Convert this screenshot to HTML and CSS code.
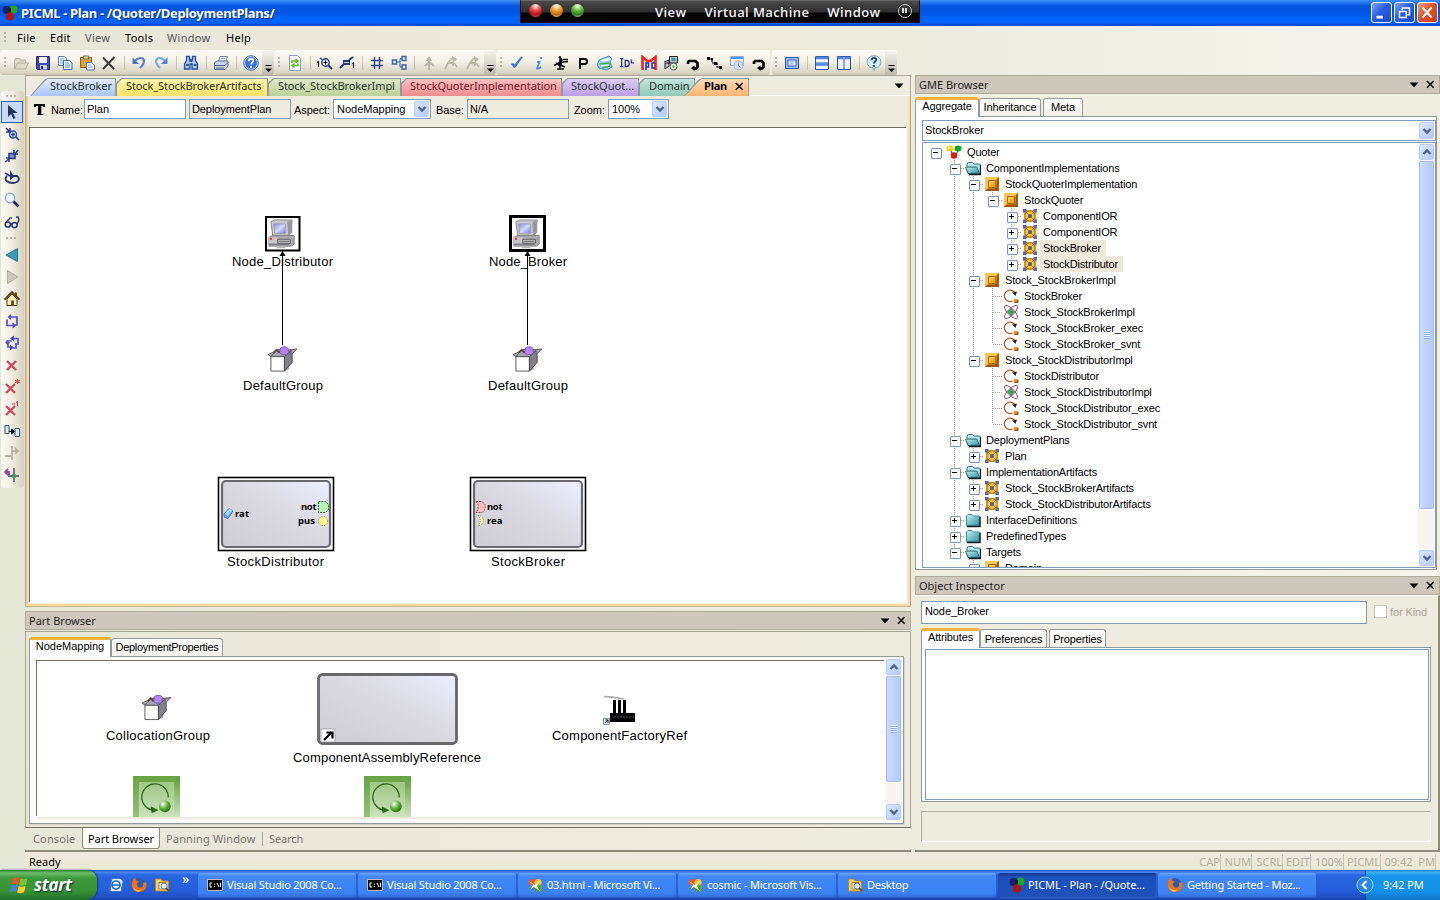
FILE: index.html
```html
<!DOCTYPE html>
<html lang="en">
<head>
<meta charset="utf-8">
<title>PICML - Plan - /Quoter/DeploymentPlans/</title>
<link rel="stylesheet" href="styles.css">
</head>
<body>
<svg class="defs" aria-hidden="true">
<defs>
<linearGradient id="gComp" x1="0" y1="1" x2="1" y2="0"><stop offset="0" stop-color="#cfced3"/><stop offset=".5" stop-color="#d9d8de"/><stop offset="1" stop-color="#eeeeff"/></linearGradient>
<linearGradient id="gGreen" x1="0" y1="0" x2="0" y2="1"><stop offset="0" stop-color="#5c9c35"/><stop offset="1" stop-color="#dcefd0"/></linearGradient>
<radialGradient id="gBall" cx=".35" cy=".3" r=".8"><stop offset="0" stop-color="#fff"/><stop offset=".5" stop-color="#5eaf35"/><stop offset="1" stop-color="#1f5c0a"/></radialGradient>
<linearGradient id="gFold" x1="0" y1="0" x2="1" y2="1"><stop offset="0" stop-color="#c8f4f4"/><stop offset="1" stop-color="#2f8f99"/></linearGradient>
<linearGradient id="gScreen" x1="0" y1="0" x2="1" y2="1"><stop offset="0" stop-color="#7f7ff4"/><stop offset=".5" stop-color="#d5dcff"/><stop offset="1" stop-color="#7272ee"/></linearGradient>

<symbol id="balls" viewBox="0 0 16 16"><circle cx="4.500" cy="5" r="4" fill="#17206b"/><circle cx="11.500" cy="4.500" r="4" fill="#24a527"/><circle cx="8" cy="11.500" r="4" fill="#b51208"/><path d="M6 3h3v4H6z" fill="#101840"/></symbol>
<symbol id="open" viewBox="0 0 16 16"><path d="M1.500 14V4.500l1-1h4l1 1.500h5V8M1.500 14l3-6h11l-3 6z" fill="#dcdac9" stroke="#b5b3a0"/></symbol>
<symbol id="save" viewBox="0 0 16 16"><path d="M1.500 1.500h13v13h-12l-1-1z" fill="#3b49ae" stroke="#252c7a"/><path d="M4 2h8v6H4z" fill="#eef1fd"/><path d="M5 10h7v4.500H5z" fill="#c9cdee"/><path d="M6 11h2v3H6z" fill="#252c7a"/></symbol>
<symbol id="copy" viewBox="0 0 16 16"><path d="M1.500 1.500h6l2 2v7h-8z" fill="#f1f6ff" stroke="#5a7cc0"/><path d="M3 4h4M3 6h5M3 8h5" stroke="#7ea2dd"/><path d="M6.500 5.500h6l2.500 2.500v6.500h-8.500z" fill="#eaf2ff" stroke="#4567b0"/><path d="M8 8h4M8 10h5M8 12h5" stroke="#6d95d8"/></symbol>
<symbol id="paste" viewBox="0 0 16 16"><path d="M1.500 2.500h11v10h-11z" fill="#dda53a" stroke="#8a5c1a"/><path d="M4.500 1h5v3h-5z" fill="#f5e8b5" stroke="#7d6a3f"/><path d="M7.500 7.500h5l3 3v4.500h-8z" fill="#f4f8ff" stroke="#5870a8"/><path d="M9 10h3M9 12h5" stroke="#7ea2dd"/></symbol>
<symbol id="del" viewBox="0 0 16 16"><path d="M2 2.500 13 14M13.500 2 2 14" stroke="#3c3c3c" stroke-width="2" fill="none"/></symbol>
<symbol id="undo" viewBox="0 0 16 16"><path d="M4 6c3-4 9-4 9 0 0 3-2 5-4 7" fill="none" stroke="#5583d5" stroke-width="2.200"/><path d="M1.500 2.500V9H8z" fill="#4a76ca"/></symbol>
<symbol id="redo" viewBox="0 0 16 16"><path d="M12 6C9 2 3 2 3 6c0 3 2 5 4 7" fill="none" stroke="#7fa5e2" stroke-width="2.200"/><path d="M14.500 2.500V9H8z" fill="#5583d5"/></symbol>
<symbol id="find" viewBox="0 0 16 16"><path d="M3.500 1.500h3v3h3v-3h3v4l2 3.500v5h-5.500V9h-2v5H1.500V9l2-3.500z" fill="#a9c4f0" stroke="#2b4f9c" stroke-width="1.300"/><path d="M3 10h3M10.500 10h3M6.500 6h3" stroke="#18366f" stroke-width="1.500"/></symbol>
<symbol id="print" viewBox="0 0 16 16"><path d="M5.500 7 7 1.500h7.500L12.500 7" fill="#fff" stroke="#7586a8"/><path d="M1.500 7.500 4 6h11v5l-3 3.500H1.500z" fill="#cdd5e5" stroke="#63728f"/><path d="M2 10.500h10l3-3M3 13h8" fill="none" stroke="#4c5b7c"/><path d="M8 3.500h4M7.500 5.500h4" stroke="#86a5d8"/></symbol>
<symbol id="help" viewBox="0 0 16 16"><circle cx="8" cy="8" r="6.500" fill="#3a74da" stroke="#d9e7ff"/><circle cx="8" cy="8" r="7.300" fill="none" stroke="#3f6bb8"/><path d="M5.700 6.300C5.800 3 10.500 3.300 10.200 6 10 7.600 8 7.700 8 9.500M8 11v1.700" fill="none" stroke="#fff" stroke-width="1.700"/></symbol>
<symbol id="refresh" viewBox="0 0 16 16"><path d="M2.500.500h8l3 3v12h-11z" fill="#f7fcf3" stroke="#84a4cd"/><path d="M5 8V6h5M8.500 4l2.500 2-2.500 2M11 8.500v2H6M7.500 8.500 5 10.500l2.500 2" fill="none" stroke="#62b61c" stroke-width="1.500"/></symbol>
<symbol id="zin" viewBox="0 0 16 16"><path d="M1.500 6v6M0 7.500l1.500-1" stroke="#222" stroke-width="1.300" fill="none"/><circle cx="8.500" cy="7.500" r="3.700" fill="#e5edff" stroke="#26366f" stroke-width="1.400"/><path d="M6.500 7.500h4M8.500 5.500v4" stroke="#111"/><path d="m11 10 4 4" stroke="#26366f" stroke-width="2"/><path d="M3 3l2 1.500" stroke="#26366f" stroke-width="1.500"/></symbol>
<symbol id="zout" viewBox="0 0 16 16"><path d="M4 5h7v5H4z" fill="#26366f"/><path d="M5 7.500h5" stroke="#cad7ff"/><path d="m1 13 4-4m5-4 4-3" stroke="#26366f" stroke-width="2"/><path d="M14.500 7v6M13 8.500l1.500-1" stroke="#222" stroke-width="1.300" fill="none"/></symbol>
<symbol id="grid" viewBox="0 0 16 16"><path d="M5.500 2v12M10.500 2v12M2 5.500h12M2 10.500h12" stroke="#2d4b8a" stroke-width="1.500"/></symbol>
<symbol id="layout" viewBox="0 0 16 16"><path d="M1.500 5h4v4h-4zM11 1.500h4v4h-4zM11 10h4v4h-4z" fill="#dbe8ff" stroke="#3d5fa5" stroke-width="1.400"/><path d="M5.500 7H9m0-3.500h2M9 3.500V12h2" fill="none" stroke="#3d5fa5"/></symbol>
<symbol id="gup" viewBox="0 0 16 16"><path d="M8 15V5M8 7l-4 4M8 7l5 4" fill="none" stroke="#b9b7a6" stroke-width="2"/><path d="M8 1l3 5H5z" fill="#b9b7a6"/></symbol>
<symbol id="gup2" viewBox="0 0 16 16"><path d="M2 14l3-6h5v3M5 8l3-4 3-1" fill="none" stroke="#b9b7a6" stroke-width="1.800"/><path d="M9 1l5 3-4 4z" fill="#b9b7a6"/><path d="M11 8l3 4" stroke="#b9b7a6" stroke-width="1.600"/></symbol>
<symbol id="check" viewBox="0 0 16 16"><path d="m2 9 3 4 1.500-.5L14 2l-2-.5-6.500 8L4 8z" fill="#3f77dc"/></symbol>
<symbol id="info" viewBox="0 0 16 16"><path d="M6 7h2.500L6 13.500c2 .5 3-.5 4-1.500M9 3h2" fill="none" stroke="#5b8be0" stroke-width="1.900"/></symbol>
<symbol id="knot" viewBox="0 0 16 16"><path d="M7 1v13M6 2l3 3-3 3M1 10.500l6-3 8-1M10 4.500h5M3 8l9 4M4 14h7" fill="none" stroke="#111" stroke-width="1.700"/><circle cx="7" cy="9" r="2.200"/></symbol>
<symbol id="psym" viewBox="0 0 16 16"><path d="M5 14V4h4.500c3.500 0 3.500 5 0 5H5" fill="none" stroke="#000" stroke-width="1.900"/></symbol>
<symbol id="stack" viewBox="0 0 16 16"><path d="M2 5 12 1l3 3-2 3 2 5-5 3-8-2-2-3z" fill="#8fcdf0" stroke="#4592c6"/><path d="m4 5 8-2 2 2-8 2z" fill="#f3fbff"/><path d="m3 9 9-1 2 2M5 13l8-2" stroke="#4ea95c" stroke-width="1.500" fill="none"/><path d="m4 11 8-1" stroke="#fff"/></symbol>
<symbol id="idl" viewBox="0 0 18 16"><path d="M1 3h4M3 3v9M1 12h4M7 5v7h1.500c4 0 4-7 0-7zM14 4v4h3" fill="none" stroke="#22307a" stroke-width="1.400"/></symbol>
<symbol id="mpc" viewBox="0 0 16 16"><path d="M1.500 15V2l5 4h3l5-4v13" fill="none" stroke="#e22" stroke-width="2.600"/><path d="M5 15V8h2.500v4H5M14 8h-3v5h3" fill="none" stroke="#2430b0" stroke-width="1.500"/></symbol>
<symbol id="mach" viewBox="0 0 16 16"><path d="M6.500 1.500h8V8h-8zM1 7l5-2v4M2 14V8h4v3l-4 3" fill="#b9c0c4" stroke="#222"/><path d="M8.500 3h4v3h-4z" fill="#2b9bab"/><circle cx="10.500" cy="11.500" r="3.500" fill="#eaf7dd" stroke="#456"/><circle cx="10.500" cy="11.500" r="1.200" fill="#4b2"/></symbol>
<symbol id="hook" viewBox="0 0 16 16"><path d="M3 9V7l1-1h6.500l2 2v4l-1.500 1.500H9" fill="none" stroke="#000" stroke-width="2.600"/><path d="M9.500 10.500v5.500L6 13z"/></symbol>
<symbol id="chain" viewBox="0 0 16 16"><path d="M1 4h4v4h5v4h5" fill="none" stroke="#000" stroke-width="1.200" stroke-dasharray="3 1"/><path d="M0 2h3v3H0zM7 7h3v3H7zM12 11h3v3h-3zM4 3h2v2H4z"/></symbol>
<symbol id="winz" viewBox="0 0 16 16"><path d="M1.500 1.500h13v9h-13z" fill="#eaf3ff" stroke="#8aafe6"/><path d="M2 3h12" stroke="#5b95e6" stroke-width="2"/><circle cx="9.500" cy="10.500" r="4.500" fill="#d5e2f6" stroke="#9db4da"/><path d="M9.500 10.500V7.500M9.500 10.500l2 2" stroke="#7d99c8"/></symbol>
<symbol id="full" viewBox="0 0 16 16"><path d="M1.500 2.500h13v11h-13z" fill="#9cbdf3" stroke="#2b55ad"/><path d="M4 5h8v6H4z" fill="#f1f6ff" stroke="#3963ba"/><path d="M5.500 7h5M5.500 9h4" stroke="#7ea2dd"/></symbol>
<symbol id="hsplit" viewBox="0 0 16 16"><path d="M1.500 1.500h13v13h-13zM1.500 8h13" fill="#eef4ff" stroke="#2b55ad"/><path d="M2 3h12M2 9.500h12" stroke="#5485de" stroke-width="2.500"/></symbol>
<symbol id="vsplit" viewBox="0 0 16 16"><path d="M1.500 1.500h13v13h-13zM8 1.500v13" fill="#eef4ff" stroke="#2b55ad"/><path d="M2 3h5M9 3h5" stroke="#5485de" stroke-width="2.500"/></symbol>
<symbol id="bubble" viewBox="0 0 16 16"><path d="M8 .8c9 0 9 12 1 12L8 15.500l-1-2.700C-1 12.800-1 .8 8 .8" fill="#d8ebfa" stroke="#7d9fb5"/><path d="M5.700 5.300C5.800 2 10.500 2.300 10.200 5 10 6.600 8 6.700 8 8.500M8 10v1.700" fill="none" stroke="#17467f" stroke-width="1.900"/></symbol>

<symbol id="cursor" viewBox="0 0 16 16"><path d="M4 1v12l3-3 2.500 5 2-1-2.500-5h4.500z" fill="#253460"/></symbol>
<symbol id="zin2" viewBox="0 0 16 16"><circle cx="9" cy="8.500" r="3.500" fill="#dfe9ff" stroke="#2a4b97" stroke-width="1.400"/><path d="M7 8.500h4M9 6.500v4" stroke="#18388b" stroke-width="1.300"/><path d="m12 11 3 3M2 2l4 4M2 6h4V2" stroke="#2a3b77" stroke-width="1.600" fill="none"/></symbol>
<symbol id="zout2" viewBox="0 0 16 16"><path d="M5 5.500h6v5H5z" fill="#7594dd" stroke="#22347a" stroke-width="1.500"/><path d="m1 14 4-3M11 6l3-4M2 10h3v4M10 2v4h4" stroke="#2a3b77" stroke-width="1.500" fill="none"/></symbol>
<symbol id="rotate" viewBox="0 0 16 16"><path d="M3 6C-1 10 4 13 9 13s8-4 4-7H9" fill="none" stroke="#26356e" stroke-width="1.800"/><path d="M6 0v10l4-3z" fill="#26356e"/><path d="m1 3 5 3" stroke="#26356e" stroke-width="2"/></symbol>
<symbol id="mag" viewBox="0 0 16 16"><circle cx="6" cy="6" r="4.700" fill="#edf4fe" stroke="#8da8d0" stroke-width="1.400"/><path d="m9.500 9.500 5 5" stroke="#2a2a4c" stroke-width="2.600"/></symbol>
<symbol id="glasses" viewBox="0 0 16 16"><circle cx="3.800" cy="10.500" r="2.600" fill="none" stroke="#26356e" stroke-width="1.500"/><circle cx="10.500" cy="11" r="2.600" fill="none" stroke="#26356e" stroke-width="1.500"/><path d="M1.500 9 6 4h2M13 10c2-2 2-5 1-7h-2M6.500 10h2" fill="none" stroke="#26356e" stroke-width="1.400"/></symbol>
<symbol id="back" viewBox="0 0 16 16"><path d="M13.500 1.500v13L2 8z" fill="#3aa0b8" stroke="#27718d"/></symbol>
<symbol id="fwd" viewBox="0 0 16 16"><path d="M3.500 1.500v13L14 8z" fill="#cbc9b8" stroke="#b3b19d"/></symbol>
<symbol id="home" viewBox="0 0 16 16"><path d="M3 8v6.500h10V8L8 3z" fill="#fae9b5" stroke="#443a1c"/><path d="M.500 8.500 8 1l7.500 7.500M12 5V1.500" fill="none" stroke="#5b3c14" stroke-width="1.800"/><path d="M7 9.500h3v5H7z" fill="#6a5030"/></symbol>
<symbol id="loop" viewBox="0 0 16 16"><path d="M6 4H13v8h-2M9 12.500H3v-6" fill="none" stroke="#5b51b5" stroke-width="1.700"/><path d="M7 1v6L3.500 4zM8.500 9.500v6l4-3z" fill="#5b51b5"/></symbol>
<symbol id="loops" viewBox="0 0 16 16"><path d="M9 3.500h5V9h-3M3 9V6h5M4 8v4h3M12 9v4H9" fill="none" stroke="#5b51c5" stroke-width="1.700"/><path d="M10 .500v6L6 3.500zM6 9.500v6l4-3z" fill="#4a45b5"/><path d="m1 7 3 4 2-4z" fill="#5b51c5"/></symbol>
<symbol id="rx" viewBox="0 0 16 16"><path d="m3 4 9 9m0-9-9 9" stroke="#d04a5c" stroke-width="2.400"/></symbol>
<symbol id="rxs" viewBox="0 0 16 16"><path d="m2 5 9 9m0-9-9 9" stroke="#d04a5c" stroke-width="2.400"/><path d="M13.500 0v5M11 1l5 3M16 1l-5 3" stroke="#d33"/></symbol>
<symbol id="rx1" viewBox="0 0 16 16"><path d="m2 5 9 9m0-9-9 9" stroke="#d04a5c" stroke-width="2.400"/><path d="M8 3h3M13.500 0v5M12 1.500l1.500-1" stroke="#d33" fill="none"/></symbol>
<symbol id="conn" viewBox="0 0 16 16"><path d="M1 2.500h4v8H1zM11 5.500h4.500v8H11z" fill="#d8edff" stroke="#37567e"/><path d="M5 8.500h3M7.500 6v5l3-2.500z" fill="#111" stroke="#111"/></symbol>
<symbol id="gj" viewBox="0 0 16 16"><path d="M8 1v14M1 11h7V6h6M11 3l3 3-3 3" fill="none" stroke="#b9b5a3" stroke-width="1.800"/></symbol>
<symbol id="gj2" viewBox="0 0 16 16"><path d="M10 1v14M1 5h4v4h10M4 2 1 5l3 3" fill="none" stroke="#8c4f8f" stroke-width="1.800"/><circle cx="10" cy="9" r="2.300" fill="#2ea84c"/></symbol>

<symbol id="root" viewBox="0 0 16 16"><path d="M5 7l3 6 4-6" fill="none" stroke="#333"/><ellipse cx="4" cy="4.500" rx="3.500" ry="3" fill="#e8d31a"/><ellipse cx="12" cy="4.500" rx="3.500" ry="3" fill="#16a325"/><circle cx="8" cy="11.500" r="3.300" fill="#dc1d17"/><circle cx="3" cy="4" r="1" fill="#fffbb0"/></symbol>
<symbol id="fo" viewBox="0 0 16 16"><path d="M2 6V4l1.500-1.500h4L9 4h5.500L15.500 5v9h-12" fill="#b5e6ea" stroke="#2b7076"/><path d="M.700 7h11l2.800 6.500H3z" fill="url(#gFold)" stroke="#235e66"/><path d="M15.500 5v9.500H4" fill="none" stroke="#0c2529" stroke-width="1.400"/></symbol>
<symbol id="fc" viewBox="0 0 16 16"><path d="M1.500 13.500V4L3 2.500h4L8.500 4h6v9.500z" fill="url(#gFold)" stroke="#3d8f96"/><path d="M15 5v9.500H2" fill="none" stroke="#0c2529" stroke-width="1.500"/></symbol>
<symbol id="gold" viewBox="0 0 16 16"><path d="M1 1h14v14H1z" fill="#d98f0b"/><path d="M1 1h14l-4 4H5v6l-4 4z" fill="#f7c55a"/><path d="M15 1v14H1l2-2 9.500-1 .5-9z" fill="#9a5a07"/><path d="M4.500 4.500h7v7h-7z" fill="#f3ac1c" stroke="#a96a0a"/><path d="M6 10V6h4" fill="none" stroke="#ffdf86"/></symbol>
<symbol id="asm" viewBox="0 0 16 16"><path d="M2 2h12v12H2z" fill="#e0a01c"/><circle cx="8" cy="8" r="5" fill="#ffc63a" stroke="#9b6500" stroke-width=".7"/><path d="m2 2 12 12M14 2 2 14" stroke="#775215" stroke-width=".7"/><path d="M1 1h3.500v3.500H1zM11.500 1H15v3.500h-3.500zM1 11.500h3.500V15H1zM11.500 11.500H15V15h-3.500z" fill="#5b67a8"/><circle cx="8" cy="8" r="2" fill="#535a9c"/></symbol>
<symbol id="ref" viewBox="0 0 16 16"><path d="M9.500 13A5.700 5.700 0 1 1 12.500 6" fill="none" stroke="#a85a2d" stroke-width="1.300"/><path d="M9 4.500 12.500 8 14 3.500z" fill="#40200c"/><path d="M11 11h4v4h-4z" fill="#dd9418"/><path d="M12 14.500h3V12" fill="none" stroke="#6f4407"/></symbol>
<symbol id="atom" viewBox="0 0 16 16"><g fill="none" stroke="#8b4e69"><ellipse cx="8" cy="8" rx="8.500" ry="3.200" transform="rotate(45 8 8)"/><ellipse cx="8" cy="8" rx="8.500" ry="3.200" transform="rotate(-45 8 8)"/></g><path d="m8 4.500 3.500 3.500L8 11.500 4.500 8z" fill="#2ba35b"/></symbol>

<symbol id="pc" viewBox="0 0 32 32"><path d="M4 4 8 2h18l-2 14-4 3H6z" fill="#c6c6ca" stroke="#88888c"/><path d="M21 4l5-2v13l-4 3z" fill="#97979b"/><path d="M7 6h12v10H8z" fill="url(#gScreen)" stroke="#a3a3ab"/><path d="M2 20l4-2h22v9l-3 2H2z" fill="#aaaaae" stroke="#7f7f83"/><path d="M2 20h9v8H2z" fill="#c7c7cb"/><path d="M11 22h13v4H11zM2 27h21M12 24h11" fill="#ccc" stroke="#606064"/><path d="M3 20.500h2v2H3z" fill="#e32424"/><path d="M10 30.500h9" stroke="#bbb" stroke-width="1.500"/></symbol>
<symbol id="box" viewBox="0 0 32 28"><path d="m4 9 7-6h16l-4 7v14l-5 2H4z" fill="#b1afb5"/><path d="M4 11h14v15H4z" fill="#fff" stroke="#5e5c62"/><path d="m18 11 8-7v13l-8 9z" fill="#838187" stroke="#4b494f"/><path d="m4 11 6-7h15l-7 7zM4 11l-3-2 8-4M25 4l6-1-5 5" fill="#a9a7ad" stroke="#5b595f"/><path d="M14 2l2-1h4l2 2v4l-2 2h-5l-2-2z" fill="#b386f6" stroke="#7757b4"/><path d="m7 7 3-3 3 3" stroke="#5a4a3a" stroke-width="2" fill="none"/></symbol>
<symbol id="proc" viewBox="0 0 48 48"><path d="M0 0h48v48H0z" fill="url(#gGreen)"/><path d="M0 0h48l-6 6H6v42H0z" fill="#6fa84c" fill-opacity=".6"/><path d="M6 6h36v42H6z" fill="#c8e1b6" fill-opacity=".55"/><path d="M36 22A13.500 13.500 0 1 0 21 35" fill="none" stroke="#2d6818" stroke-width="1.300"/><path d="m18 31 8 4-7 3z" fill="#2d6818"/><circle cx="32.500" cy="31" r="6" fill="url(#gBall)"/></symbol>

<symbol id="cmd" viewBox="0 0 16 16"><path d="M.5 2.500h15v11H.5z" fill="#050505" stroke="#bbb"/><path d="M5 6H3v4h2M7.500 6.500V7.500M7.500 9v1M10 6l2 4M13.500 6v4" stroke="#fff" fill="none"/></symbol>
<symbol id="vsweb" viewBox="0 0 16 16"><circle cx="5" cy="5.500" r="3.500" fill="#e9542a"/><circle cx="11" cy="5.500" r="3.500" fill="#ffc832"/><circle cx="5" cy="11" r="3.500" fill="#3b8dd8"/><circle cx="11.500" cy="11" r="3.500" fill="#52a82d"/><path d="m2 4 6 4 6-5-4 6 3 5-6-4-4 3 3-5z" fill="#fff4bd"/></symbol>
<symbol id="desk" viewBox="0 0 16 16"><path d="M1.500 2h5l2 2h6v10h-13z" fill="#f4ce64" stroke="#b9822e"/><path d="M5 5.500h7V12H5z" fill="#f9f9ef" stroke="#a9853a"/><circle cx="10" cy="9" r="3" fill="#d9efff" stroke="#6a7d9a"/><path d="m12 11 3 3" stroke="#74532a" stroke-width="1.800"/></symbol>
<symbol id="fox" viewBox="0 0 16 16"><circle cx="8" cy="8" r="7" fill="#295bb0"/><path d="M1 6c0-3 2-5 4-5L4.500 3 8 5 5.500 7 7 10c3 2 6 0 5-4l3-1c2 6-2 10-7 10C3 15 0 11 1 6" fill="#ee7218"/><path d="M2 9c1 4 5 5 8 4-2 3-7 2-8-4" fill="#ffc548"/></symbol>
<symbol id="outlook" viewBox="0 0 16 16"><path d="M4 1.500h9l2 3-2 10H2l1-9z" fill="#dff1ff" stroke="#3978c9"/><circle cx="8" cy="8" r="4" fill="none" stroke="#1c68c8" stroke-width="1.700"/><path d="M5 8h6" stroke="#1c68c8" stroke-width="1.500"/></symbol>
<symbol id="flag" viewBox="0 0 20 20"><path d="M3 3c2-1 4-1 6.500 0L8 9.500c-2-1-4-1-6.500 0z" fill="#e9532b"/><path d="M10.500 3.500c2 1 4 1 7 0L16 10c-3 1-5 1-7 0z" fill="#7cc236"/><path d="M1.300 10.500c2-1 4-1 6.500 0L6 17c-2-1-4-1-6 0z" fill="#4281e0"/><path d="M8.700 11c2 1 4 1 7 0L14 17.500c-3 1-5 1-7 0z" fill="#ffc934"/></symbol>
<symbol id="cx" viewBox="0 0 10 10"><path d="m1 1 7.500 7.500M8.500 1 1 8.500" stroke="#000" stroke-width="1.600"/></symbol>
<symbol id="dn" viewBox="0 0 10 6"><path d="M.5.500h9L5 5.200z"/></symbol>
<symbol id="chevd" viewBox="0 0 10 8"><path d="m1.500 2 3.500 3.500L8.500 2" fill="none" stroke="#4d6185" stroke-width="2.300"/></symbol>
<symbol id="chevu" viewBox="0 0 10 8"><path d="M1.500 6 5 2.500 8.500 6" fill="none" stroke="#4d6185" stroke-width="2.300"/></symbol>
<symbol id="more" viewBox="0 0 8 8"><path d="M1.500.5h6" stroke="#000"/><path d="M1 3.500h7L4.500 7z"/></symbol>
</defs>
</svg>

<header class="title">
  <svg class="i16"><use href="#balls"/></svg>
  <h1>PICML - Plan - /Quoter/DeploymentPlans/</h1>
  <div class="vmbar">
    <span class="orb red"></span><span class="orb amber"></span><span class="orb green"></span>
    <nav><b>View</b><b>Virtual Machine</b><b>Window</b></nav>
    <span class="pause"></span>
  </div>
  <div class="winbtns">
    <svg viewBox="0 0 21 21"><path d="M5 15.500h7" stroke="#fff" stroke-width="3"/></svg>
    <svg viewBox="0 0 21 21"><path d="M8 8V5.500h8V13h-3M5 9.500h7.500V16H5z" fill="none" stroke="#fff" stroke-width="1.600"/></svg>
    <svg class="close" viewBox="0 0 21 21"><path d="m5 5 10 11M15 5 5 16" stroke="#fff" stroke-width="2.300"/></svg>
  </div>
</header>

<nav class="menu"><i class="grip"></i><span class="m1">File</span><span class="m2">Edit</span><span class="m3 dim">View</span><span class="m4">Tools</span><span class="m5 dim">Window</span><span class="m6">Help</span></nav>

<div class="tools">
  <div class="bar first"><i class="grip"></i>
    <span class="tb"><svg><use href="#open"/></svg></span><span class="tb"><svg><use href="#save"/></svg></span><span class="tb"><svg><use href="#copy"/></svg></span><span class="tb"><svg><use href="#paste"/></svg></span><span class="tb"><svg><use href="#del"/></svg></span><i class="sep"></i>
    <span class="tb"><svg><use href="#undo"/></svg></span><span class="tb"><svg><use href="#redo"/></svg></span><i class="sep"></i>
    <span class="tb"><svg><use href="#find"/></svg></span><i class="sep"></i>
    <span class="tb"><svg><use href="#print"/></svg></span><i class="sep"></i>
    <span class="tb"><svg><use href="#help"/></svg></span><span class="over"><svg><use href="#more"/></svg></span>
  </div>
  <div class="bar"><i class="grip"></i>
    <span class="tb"><svg><use href="#refresh"/></svg></span><i class="sep"></i>
    <span class="tb"><svg><use href="#zin"/></svg></span><span class="tb"><svg><use href="#zout"/></svg></span><i class="sep"></i>
    <span class="tb"><svg><use href="#grid"/></svg></span><span class="tb"><svg><use href="#layout"/></svg></span><i class="sep"></i>
    <span class="tb"><svg><use href="#gup"/></svg></span><span class="tb"><svg><use href="#gup2"/></svg></span><span class="tb"><svg><use href="#gup2"/></svg></span><span class="over"><svg><use href="#more"/></svg></span>
  </div>
  <div class="bar"><i class="grip"></i>
    <span class="tb"><svg><use href="#check"/></svg></span><span class="tb"><svg><use href="#info"/></svg></span><span class="tb"><svg><use href="#knot"/></svg></span><span class="tb"><svg><use href="#psym"/></svg></span><span class="tb"><svg><use href="#stack"/></svg></span><span class="tb"><svg><use href="#idl"/></svg></span><span class="tb"><svg><use href="#mpc"/></svg></span><span class="tb"><svg><use href="#mach"/></svg></span><span class="tb"><svg><use href="#hook"/></svg></span><span class="tb"><svg><use href="#chain"/></svg></span><span class="tb"><svg><use href="#winz"/></svg></span><span class="tb"><svg><use href="#hook"/></svg></span>
  </div>
  <div class="bar last"><i class="grip"></i>
    <span class="tb"><svg><use href="#full"/></svg></span><i class="sep"></i>
    <span class="tb"><svg><use href="#hsplit"/></svg></span><span class="tb"><svg><use href="#vsplit"/></svg></span><i class="sep"></i>
    <span class="tb"><svg><use href="#bubble"/></svg></span><span class="over"><svg><use href="#more"/></svg></span>
  </div>
</div>

<main>
  <aside class="side">
    <div class="vbar"><i class="hgrip"></i>
      <span class="tb on"><svg><use href="#cursor"/></svg></span><span class="tb"><svg><use href="#zin2"/></svg></span><span class="tb"><svg><use href="#zout2"/></svg></span><span class="tb"><svg><use href="#rotate"/></svg></span><span class="tb"><svg><use href="#mag"/></svg></span><span class="tb"><svg><use href="#glasses"/></svg></span>
      <i class="hgrip two"></i>
      <span class="tb"><svg><use href="#back"/></svg></span><span class="tb"><svg><use href="#fwd"/></svg></span><span class="tb"><svg><use href="#home"/></svg></span><span class="tb"><svg><use href="#loop"/></svg></span><span class="tb"><svg><use href="#loops"/></svg></span><span class="tb"><svg><use href="#rx"/></svg></span><span class="tb"><svg><use href="#rxs"/></svg></span><span class="tb"><svg><use href="#rx1"/></svg></span><span class="tb"><svg><use href="#conn"/></svg></span><span class="tb"><svg><use href="#gj"/></svg></span><span class="tb"><svg><use href="#gj2"/></svg></span>
    </div>
  </aside>

  <section class="center">
    <div class="editor">
      <div class="doctabs">
        <span class="dt a"><b>StockBroker</b></span><span class="dt b"><b>Stock_StockBrokerArtifacts</b></span><span class="dt c"><b>Stock_StockBrokerImpl</b></span><span class="dt d"><b>StockQuoterImplementation</b></span><span class="dt e"><b>StockQuot...</b></span><span class="dt f"><b>Domain</b></span><span class="dt g"><b>Plan</b><svg><use href="#cx"/></svg></span>
        <svg class="ddown"><use href="#dn"/></svg>
      </div>
      <div class="frame">
        <div class="props">
          <svg class="tico" viewBox="0 0 12 12"><path d="M0 0h11v3H9.500L9 2H7.300v8H9v1H3v-1h1V2H2l-.5 1H0z"/></svg>
          <label class="l1">Name:</label><span class="inp">Plan</span><span class="inp ro">DeploymentPlan</span>
          <label class="l2">Aspect:</label><span class="sel w97">NodeMapping<i><svg><use href="#chevd"/></svg></i></span>
          <label class="l3">Base:</label><span class="inp ro nb">N/A</span>
          <label class="l4">Zoom:</label><span class="sel w61">100%<i><svg><use href="#chevd"/></svg></i></span>
        </div>
        <svg class="canvas" viewBox="30 128 877 475" width="877" height="475">
          <rect x="266" y="217" width="33.500" height="33.500" fill="#fff" stroke="#000" stroke-width="2"/>
          <use href="#pc" x="267" y="218" width="31" height="31"/>
          <rect x="510.500" y="216.500" width="34" height="34" fill="#fff" stroke="#000" stroke-width="3"/>
          <use href="#pc" x="512" y="218" width="31" height="31"/>
          <path d="M282.500 345v-94M527.500 345v-94" stroke="#000"/>
          <path d="m282.500 251 3 5h-6zM527.500 251l3 5h-6z"/>
          <use href="#box" x="267" y="346" width="31" height="27"/><use href="#box" x="512" y="346" width="31" height="27"/>
          <g class="lbl">
            <text x="232" y="266" textLength="101">Node_Distributor</text><text x="489" y="266" textLength="78">Node_Broker</text>
            <text x="243" y="390" textLength="80">DefaultGroup</text><text x="488" y="390" textLength="80">DefaultGroup</text>
            <text x="227" y="566" textLength="97">StockDistributor</text><text x="491" y="566" textLength="74">StockBroker</text>
          </g>
          <g fill="#fff" stroke="#000" stroke-width="1.600"><rect x="218.500" y="477.500" width="115" height="73"/><rect x="470.500" y="477.500" width="115" height="73"/></g>
          <g fill="url(#gComp)" stroke="#68676c" stroke-width="2.200"><rect x="222" y="481" width="108" height="66" rx="4"/><rect x="474" y="481" width="108" height="66" rx="4"/></g>
          <g class="port"><text x="235" y="517" textLength="14">rat</text><text x="301" y="510" textLength="15.500">not</text><text x="298" y="524" textLength="17">pus</text><text x="487" y="510" textLength="15.500">not</text><text x="487" y="524" textLength="15.500">rea</text></g>
          <path d="m224 514 5-5.500 4 2.500-5 7.500-3.500-1z" fill="#58a5e2" stroke="#3171b4" stroke-width=".8"/><path d="m224.500 514 5-5.500 3 2-5 5.500z" fill="#a5d5f8"/>
          <path d="M318.500 501.500h7l3 3v5l-3 3h-7z" fill="#b6f7b6" stroke="#333" stroke-dasharray="2 1" stroke-width=".8"/>
          <circle cx="323" cy="521" r="4.700" fill="#fbf88f" stroke="#555" stroke-dasharray="1 1.500" stroke-width=".8"/>
          <path d="M476 501.500h6l3 3v5l-3 3h-6l2-3v-5z" fill="#fbbcc2" stroke="#733" stroke-dasharray="2 1" stroke-width=".8"/>
          <path d="M478 515.500c7 0 7 10 0 10 3-3 3-7 0-10z" fill="#fbf8a0" stroke="#777" stroke-dasharray="1 1" stroke-width=".8"/>
        </svg>
      </div>
    </div>

    <div class="pane-h parts-h"><span>Part Browser</span><svg class="d"><use href="#dn"/></svg><svg class="x"><use href="#cx"/></svg></div>
    <div class="parts">
      <div class="tabs"><span class="tab on t1">NodeMapping</span><span class="tab t2">DeploymentProperties</span></div>
      <div class="partpage">
        <svg class="partcanvas" viewBox="37 661 848 156" width="848" height="156">
          <use href="#box" x="141" y="694.500" width="31" height="27"/>
          <rect x="318.500" y="674.500" width="138" height="69" rx="4" fill="url(#gComp)" stroke="#68676c" stroke-width="2.800"/>
          <path d="M321 729h14v13h-14z" fill="#fff" stroke="#888" stroke-width=".6"/><path d="m324 740 7-7M326.500 732.500h6v6" fill="none" stroke="#000" stroke-width="2.200"/>
          <path d="M610 722v-9h3v-13h3v13h2v-13h3v13h2v-13h3v13h9v9z"/><path d="M604 696.500l8 .5 12 2" stroke="#aaa" stroke-width="1.600"/><path d="M614 717h20" stroke="#555" stroke-dasharray="2 1"/><path d="M603.500 718.500h6v6h-6z" fill="#dfe9fa" stroke="#7d94bb"/><path d="m605 723 3-3h-2.500M608 720v3" stroke="#111" fill="none"/>
          <use href="#proc" x="133" y="776" width="47" height="47"/><use href="#proc" x="364" y="776" width="47" height="47"/>
          <g class="lbl"><text x="106" y="740" textLength="104">CollocationGroup</text><text x="293" y="762" textLength="188">ComponentAssemblyReference</text><text x="552" y="740" textLength="135">ComponentFactoryRef</text></g>
        </svg>
        <div class="scroll"><i><svg><use href="#chevu"/></svg></i><em class="p"></em><i><svg><use href="#chevd"/></svg></i></div>
      </div>
    </div>
    <div class="btabs"><span class="b1">Console</span><span class="b2 on">Part Browser</span><span class="b3">Panning Window</span><span class="b4">Search</span></div>
  </section>

  <section class="right">
    <div class="pane-h"><span>GME Browser</span><svg class="d"><use href="#dn"/></svg><svg class="x"><use href="#cx"/></svg></div>
    <div class="gme">
      <div class="tabs"><span class="tab on t3">Aggregate</span><span class="tab t4">Inheritance</span><span class="tab t5">Meta</span></div>
      <div class="gmepage">
        <div class="sel combo">StockBroker<i><svg><use href="#chevd"/></svg></i></div>
        <div class="treebox">
          <ul class="tree">
            <li><i class="x m o"></i><svg><use href="#root"/></svg><span>Quoter</span></li>
            <li><i></i><i class="x m v"></i><svg><use href="#fo"/></svg><span>ComponentImplementations</span></li>
            <li><i></i><i class="v"></i><i class="x m v"></i><svg><use href="#gold"/></svg><span>StockQuoterImplementation</span></li>
            <li><i></i><i class="v"></i><i class="v"></i><i class="x m h"></i><svg><use href="#gold"/></svg><span>StockQuoter</span></li>
            <li><i></i><i class="v"></i><i class="v"></i><i></i><i class="x v"></i><svg><use href="#asm"/></svg><span>ComponentIOR</span></li>
            <li><i></i><i class="v"></i><i class="v"></i><i></i><i class="x v"></i><svg><use href="#asm"/></svg><span>ComponentIOR</span></li>
            <li><i></i><i class="v"></i><i class="v"></i><i></i><i class="x v"></i><svg><use href="#asm"/></svg><span class="hl">StockBroker</span></li>
            <li><i></i><i class="v"></i><i class="v"></i><i></i><i class="x h"></i><svg><use href="#asm"/></svg><span class="hl">StockDistributor</span></li>
            <li><i></i><i class="v"></i><i class="x m v"></i><svg><use href="#gold"/></svg><span>Stock_StockBrokerImpl</span></li>
            <li><i></i><i class="v"></i><i class="v"></i><i class="n v"></i><svg><use href="#ref"/></svg><span>StockBroker</span></li>
            <li><i></i><i class="v"></i><i class="v"></i><i class="n v"></i><svg><use href="#atom"/></svg><span>Stock_StockBrokerImpl</span></li>
            <li><i></i><i class="v"></i><i class="v"></i><i class="n v"></i><svg><use href="#ref"/></svg><span>Stock_StockBroker_exec</span></li>
            <li><i></i><i class="v"></i><i class="v"></i><i class="n h"></i><svg><use href="#ref"/></svg><span>Stock_StockBroker_svnt</span></li>
            <li><i></i><i class="v"></i><i class="x m h"></i><svg><use href="#gold"/></svg><span>Stock_StockDistributorImpl</span></li>
            <li><i></i><i class="v"></i><i></i><i class="n v"></i><svg><use href="#ref"/></svg><span>StockDistributor</span></li>
            <li><i></i><i class="v"></i><i></i><i class="n v"></i><svg><use href="#atom"/></svg><span>Stock_StockDistributorImpl</span></li>
            <li><i></i><i class="v"></i><i></i><i class="n v"></i><svg><use href="#ref"/></svg><span>Stock_StockDistributor_exec</span></li>
            <li><i></i><i class="v"></i><i></i><i class="n h"></i><svg><use href="#ref"/></svg><span>Stock_StockDistributor_svnt</span></li>
            <li><i></i><i class="x m v"></i><svg><use href="#fo"/></svg><span>DeploymentPlans</span></li>
            <li><i></i><i class="v"></i><i class="x h"></i><svg><use href="#asm"/></svg><span>Plan</span></li>
            <li><i></i><i class="x m v"></i><svg><use href="#fo"/></svg><span>ImplementationArtifacts</span></li>
            <li><i></i><i class="v"></i><i class="x v"></i><svg><use href="#asm"/></svg><span>Stock_StockBrokerArtifacts</span></li>
            <li><i></i><i class="v"></i><i class="x h"></i><svg><use href="#asm"/></svg><span>Stock_StockDistributorArtifacts</span></li>
            <li><i></i><i class="x v"></i><svg><use href="#fc"/></svg><span>InterfaceDefinitions</span></li>
            <li><i></i><i class="x v"></i><svg><use href="#fc"/></svg><span>PredefinedTypes</span></li>
            <li><i></i><i class="x m h"></i><svg><use href="#fo"/></svg><span>Targets</span></li>
            <li><i></i><i></i><i class="x m h"></i><svg><use href="#gold"/></svg><span>Domain</span></li>
          </ul>
          <div class="scroll"><i><svg><use href="#chevu"/></svg></i><em class="t"></em><i><svg><use href="#chevd"/></svg></i></div>
        </div>
      </div>
    </div>
    <div class="pane-h obj-h"><span>Object Inspector</span><svg class="d"><use href="#dn"/></svg><svg class="x"><use href="#cx"/></svg></div>
    <div class="obj">
      <div class="objrow"><span class="objname">Node_Broker</span><i class="cb"></i><span class="kind">for Kind</span></div>
      <div class="tabs"><span class="tab on t6">Attributes</span><span class="tab t7">Preferences</span><span class="tab t8">Properties</span></div>
      <div class="objpage"><div></div></div>
      <div class="desc"></div>
    </div>
  </section>
</main>

<footer class="status"><span class="ready">Ready</span><span class="s c1">CAP</span><span class="s c2">NUM</span><span class="s c3">SCRL</span><span class="s c4">EDIT</span><span class="s c5">100%</span><span class="s c6">PICML</span><span class="s c7">09:42&nbsp; PM</span></footer>

<div class="taskbar">
  <div class="start"><svg><use href="#flag"/></svg><b>start</b></div>
  <div class="quick"><svg><use href="#outlook"/></svg><svg><use href="#fox"/></svg><svg><use href="#desk"/></svg><span>»</span></div>
  <div class="task"><svg><use href="#cmd"/></svg><span>Visual Studio 2008 Co...</span></div>
  <div class="task"><svg><use href="#cmd"/></svg><span>Visual Studio 2008 Co...</span></div>
  <div class="task"><svg><use href="#vsweb"/></svg><span>03.html - Microsoft Vi...</span></div>
  <div class="task"><svg><use href="#vsweb"/></svg><span>cosmic - Microsoft Vis...</span></div>
  <div class="task"><svg><use href="#desk"/></svg><span>Desktop</span></div>
  <div class="task act"><svg><use href="#balls"/></svg><span>PICML - Plan - /Quote...</span></div>
  <div class="task"><svg><use href="#fox"/></svg><span>Getting Started - Moz...</span></div>
  <div class="tray"><svg viewBox="0 0 18 18"><circle cx="9" cy="9" r="8" fill="#2788e8" stroke="#9fd7ff"/><path d="M10.500 5 6.500 9l4 4" fill="none" stroke="#fff" stroke-width="2"/></svg><span>9:42 PM</span></div>
</div>
</body>
</html>
```

FILE: styles.css
```css
* { box-sizing: border-box; }
html, body { margin: 0; width: 1440px; height: 900px; overflow: hidden; }
body {
  display: flex; flex-direction: column;
  background: linear-gradient(90deg, #e5e7d6 0, #ece9dc 300px, #eeebdf 900px, #f5f3ec 1440px);
  font: 11px/16px "Liberation Sans", sans-serif; color: #000;
}
svg { display: block; flex: none; }
.defs { position: absolute; width: 0; height: 0; }
h1, ul { margin: 0; padding: 0; }
i, em { font-style: normal; flex: none; }

.title {
  position: relative; height: 26px; flex: none; display: flex; align-items: center; padding-left: 2px;
  background: linear-gradient(#3b8df5 0, #2a7cf0 2px, #0755dc 6px, #0054e3 12px, #0064fc 19px, #0362f8 23px, #003fc4 26px);
}
.i16 { width: 16px; height: 16px; }
.title h1 { margin-left: 3px; font: bold 13px/24px "Noto Sans", sans-serif; color: #fff; text-shadow: 1px 1px #0a2f80; letter-spacing: -.35px; white-space: nowrap; }
.vmbar {
  position: absolute; left: 520px; top: 0; width: 400px; height: 23px; display: flex; align-items: center; padding-left: 8px;
  background: linear-gradient(#4b4b4b 0, #2e2e2e 11px, #060606 12px, #000 22px); border: 1px solid #111; border-top-color: #666;
}
.orb { width: 13px; height: 13px; border-radius: 50%; margin-right: 8px; margin-top: -3px; }
.orb.red { background: radial-gradient(circle at 50% 15%, #fff 0, #f05050 35%, #a11 70%, #f88 100%); }
.orb.amber { background: radial-gradient(circle at 50% 15%, #fff 0, #f2a73b 35%, #b76a10 70%, #fd9 100%); }
.orb.green { background: radial-gradient(circle at 50% 15%, #fff 0, #6fc04a 35%, #2f7d1c 70%, #bf9 100%); }
.vmbar nav { display: flex; gap: 18px; margin-left: 63px; font: 600 13px/20px "Open Sans", sans-serif; color: #f2f2f2; letter-spacing: .4px; white-space: nowrap; }
.vmbar b { font-weight: 600; }
.pause { position: absolute; right: 7px; top: 3px; width: 14px; height: 14px; border: 1.5px solid #ccc; border-radius: 50%; background: linear-gradient(90deg, transparent 3px, #ddd 3px, #ddd 5px, transparent 5px, transparent 6px, #ddd 6px, #ddd 8px, transparent 8px) no-repeat 0 3px / 11px 5px; }
.winbtns { position: absolute; right: 2px; top: 2px; display: flex; gap: 2px; }
.winbtns svg { width: 21px; height: 21px; border: 1px solid #fff; border-radius: 3px; background: linear-gradient(135deg, #7ba4f5, #2b5fe0 45%, #1a49cc); }
.winbtns .close { background: linear-gradient(135deg, #f0a080, #e0532c 45%, #c73a12); }

.grip { width: 3px; height: 12px; margin: 0 3px 0 4px; background: repeating-linear-gradient(#b9b6a5 0 2px, transparent 2px 4px); background-size: 2px 100%; background-repeat: no-repeat; }
.menu { height: 24px; flex: none; display: flex; align-items: center; font: 11px/24px "Noto Sans", sans-serif; letter-spacing: .3px; }
.menu .grip { margin-right: 10px; }
.menu .dim { color: #555; }
.m1 { width: 33px; } .m2 { width: 35px; } .m3 { width: 40px; } .m4 { width: 42px; } .m5 { width: 59px; }

.tools { display: flex; height: 25px; flex: none; }
.bar { display: flex; align-items: center; height: 25px; padding-top: 1px; border-radius: 3px; background: linear-gradient(#fbfaf6, #f4f1e6 45%, #d8d4c2 92%, #c8c3ad); }
.bar.first .grip { margin-left: 4px; }
.bar.last { margin-left: 2px; }
.bar.last .grip { margin-left: 3px; }
.tb { width: 22px; height: 22px; flex: none; display: flex; align-items: center; justify-content: center; }
.tb svg { width: 16px; height: 16px; }
.sep { width: 1px; height: 14px; margin: 0 3px 0 4px; background: #c5c2b0; }
.over { width: 12px; height: 24px; display: flex; align-items: flex-end; padding: 0 0 2px 2px; background: linear-gradient(#f5f3ec, #bfbba9); border-radius: 0 3px 3px 0; }
.over svg { width: 8px; height: 8px; }

main { display: flex; height: 777px; flex: none; }
.side { width: 25px; flex: none; padding-top: 16px; background: #e5e7d6; }
.vbar { width: 23px; margin-left: 1px; height: 397px; display: flex; flex-direction: column; background: linear-gradient(90deg, #fbfaf6, #f2efe3 45%, #d4d0bd); border-radius: 3px; }
.hgrip { height: 10px; background: linear-gradient(90deg, #b9b6a5 2px, transparent 2px) 0 4px / 4px 2px repeat-x; width: 11px; margin-left: 5px; background-clip: content-box; }
.hgrip.two { height: 11px; }
.tb.on { width: 22px; background: #c9daf6; border: 1px solid #2f5fb5; }

.center { width: 886px; flex: none; display: flex; flex-direction: column; }
.editor { height: 532px; flex: none; border: 1px solid #aca899; border-bottom-color: #c9b98f; background: #eeebdf; }
.doctabs { height: 20px; display: flex; padding: 2px 0 0 4px; border-bottom: 1px solid #fff; position: relative; font: 11px/16px "Noto Sans", sans-serif; letter-spacing: 0; }
.dt { position: relative; height: 18px; flex: none; background: #8f9c9e; clip-path: polygon(0 100%, 14px 2px, 18px 0, 100% 0, 100% 100%); white-space: nowrap; color: #26352c; }
.dt::before { content: ""; position: absolute; inset: 1px 1px 0 1px; clip-path: polygon(0 100%, 14px 2px, 17px 0, 100% 0, 100% 100%); }
.dt b { position: relative; font-weight: inherit; }
.dt.b, .dt.c, .dt.d, .dt.e, .dt.f { clip-path: polygon(0 5px, 5px 0, 100% 0, 100% 100%, 0 100%); }
.dt.b::before, .dt.c::before, .dt.d::before, .dt.e::before, .dt.f::before { clip-path: polygon(0 5px, 5px 0, 100% 0, 100% 100%, 0 100%); }
.dt.a { width: 86px; padding-left: 20px; letter-spacing: -.05px; } .dt.a::before { background: linear-gradient(#e2ecfd, #a9c5f2); }
.dt.b { width: 152px; padding-left: 10px; letter-spacing: -.1px; } .dt.b::before { background: linear-gradient(#fff4b0, #ffe164); }
.dt.c { width: 133px; padding-left: 10px; letter-spacing: -.1px; } .dt.c::before { background: linear-gradient(#dce9c8, #bcd199); }
.dt.d { width: 161px; padding-left: 9px; color: #6e1c2b; letter-spacing: -.05px; } .dt.d::before { background: linear-gradient(#fbc0c0, #f08b8f); }
.dt.e { width: 77px; padding-left: 9px; letter-spacing: .05px; } .dt.e::before { background: linear-gradient(#dccbf3, #bb9fe3); }
.dt.f { width: 56px; padding-left: 10px; letter-spacing: -.05px; } .dt.f::before { background: linear-gradient(#c6e5dc, #8fc9b8); }
.dt.g { width: 65px; margin-left: -11px; padding-left: 20px; font-weight: bold; letter-spacing: -.2px; display: flex; align-items: center; color: #000; } .dt.g::before { background: linear-gradient(#fddcb8, #fdb56f); }
.dt.g b { margin-top: -3px; }
.dt.g svg { position: relative; width: 9px; height: 9px; margin-left: 8px; margin-top: -1px; }
.ddown { position: absolute; right: 6px; top: 7px; width: 10px; height: 6px; }
.frame { height: 510px; border: 2px solid #fbc893; border-right-color: #fbe0a8; border-top: 0; border-bottom: 2px solid #fbd9a0; }
.props { display: flex; height: 30px; align-items: center; padding: 0 0 5px 6px; white-space: nowrap; }
.tico { width: 12px; height: 12px; margin-right: 5px; margin-top: 3px; }
.l1 { width: 33px; } .l2 { width: 40px; margin-left: 3px; } .l3 { width: 31px; margin-left: 5px; } .l4 { width: 34px; margin-left: 5px; }
.props label { margin-top: 3px; letter-spacing: -.1px; }
.inp { width: 102px; height: 20px; border: 1px solid #7f9db9; background: #fff; padding-left: 2px; line-height: 18px; }
.inp.ro { background: #eeebdf; margin-left: 3px; letter-spacing: -.1px; }
.inp.ro.nb { margin-left: 0; }
.sel { display: flex; justify-content: space-between; height: 20px; border: 1px solid #7f9db9; background: #fff; padding: 1px 1px 1px 3px; line-height: 17px; }
.w97 { width: 98px; margin-left: -1px; } .w61 { width: 61px; }
.sel i, .scroll i { width: 15px; display: flex; align-items: center; justify-content: center; background: linear-gradient(135deg, #dbe6fd, #b5cafa); border: 1px solid #b9cdf7; border-radius: 2px; }
.sel svg, .scroll svg { width: 10px; height: 8px; }
.canvas { background: #fff; box-shadow: -1px -1px #716f64; margin-left: 2px; margin-top: 2px; }
.lbl { font: 13px "Liberation Sans", sans-serif; }
.port { font: bold 9.5px "Noto Sans", sans-serif; }

.pane-h { height: 19px; flex: none; display: flex; align-items: center; padding: 0 4px 0 3px; background: #cec7bc; border: 1px solid #b1ab9a; font: 11px/17px "Noto Sans", sans-serif; color: #1c1c1c; }
.pane-h span { flex: 1; }
.pane-h .d { width: 10px; height: 6px; margin-right: 7px; }
.pane-h .x { width: 9px; height: 9px; }
.parts-h { margin-top: 4px; }
.parts { margin-top: 1px; height: 197px; flex: none; border: 1px solid #a7a495; border-bottom-color: #716f64; padding: 4px 6px 4px 3px; }
.tabs { display: flex; align-items: flex-end; height: 20px; position: relative; white-space: nowrap; }
.tab { height: 18px; border: 1px solid #919b9c; border-radius: 3px 3px 0 0; background: linear-gradient(#fff, #f2f1ea); line-height: 17px; text-align: center; margin-right: 2px; border-bottom: 0; letter-spacing: -.15px; }
.tab.on { height: 20px; margin: 0 0 -1px; background: #fff; border-top: 3px solid #f5b236; line-height: 12px; z-index: 1; }
.t1 { width: 82px; } .tab.t2 { width: 112px; letter-spacing: -.3px; }
.tab.t1 { letter-spacing: 0; }
.partpage { height: 168px; border: 1px solid #919b9c; background: #fcfbf9; display: flex; padding: 3px 1px 2px 7px; box-shadow: 1px 1px #d5d2c5; }
.partcanvas { background: #fff; margin-top: 1px; box-shadow: -1px -1px #716f64, 0 2px #efebde; }
.scroll { width: 17px; display: flex; flex-direction: column; background: #f6f5f0; padding: 1px; }
.partpage .scroll { margin: -2px 0 0 auto; }
.scroll i { height: 16px; }
.scroll em { margin: 1px 0 auto; border: 1px solid #a3bcf2; border-radius: 2px; background: repeating-linear-gradient(#eef4ff 0 1px, #8fb0f0 1px 2px) center / 6px 8px no-repeat, linear-gradient(90deg, #cbdafe, #b6cbfb); box-shadow: 0 1px #fff; }
.scroll .p { height: 106px; } .scroll .t { height: 348px; }
.btabs { height: 24px; flex: none; display: flex; font: 11px/22px "Noto Sans", sans-serif; letter-spacing: .15px; color: #77756a; border-bottom: 2px solid #8e8b7b; white-space: nowrap; }
.b1 { width: 57px; padding-left: 8px; }
.b2 { width: 78px; text-align: center; background: #fff; color: #000; border: 1px solid #8e8b7b; border-top: 0; height: 21px; border-radius: 0 0 3px 3px; letter-spacing: -.05px; }
.b3 { width: 102px; padding-left: 6px; }
.b4 { height: 14px; line-height: 14px; margin-top: 4px; padding-left: 6px; border-left: 1px solid #aca899; letter-spacing: -.1px; }

.right { width: 525px; margin-left: 4px; flex: none; display: flex; flex-direction: column; border-bottom: 2px solid #8e8b7b; }
.gme { height: 476px; flex: none; padding: 2px 3px 0 0; background: #f0ede1; }
.t3 { width: 64px; } .t4 { width: 62px; } .t5 { width: 40px; }
.gmepage { height: 454px; border: 1px solid #919b9c; background: #fff; padding: 3px 1px 0 6px; }
.combo { width: 514px; height: 21px; margin-bottom: 1px; letter-spacing: -.1px; padding-left: 2px; }
.combo i { width: 15px; }
.treebox { width: 514px; height: 426px; border: 1px solid #7f9db9; display: flex; overflow: hidden; }
.tree { list-style: none; flex: 1; padding: 1px 0 0 3px; }
.tree li { display: flex; height: 16px; white-space: nowrap; }
.tree li > i { width: 19px; height: 16px; position: relative; }
.tree li > svg { width: 16px; height: 16px; margin: 0 2px 0 1px; }
.tree span { padding: 0 3px; letter-spacing: -.17px; }
.tree .hl { background: #ece9d8; padding-right: 5px; }
.tree .v { background: repeating-linear-gradient(#a5a294 0 1px, transparent 1px 2px) 9px 0 / 1px 16px no-repeat; }
.tree .h { background: repeating-linear-gradient(#a5a294 0 1px, transparent 1px 2px) 9px 0 / 1px 8px no-repeat; }
.tree .x::before, .tree .n::before { content: ""; position: absolute; left: 10px; right: -1px; top: 8px; height: 1px; background: repeating-linear-gradient(90deg, #a5a294 0 1px, transparent 1px 2px); }
.tree .o::before { display: none; }
.tree .x::after { content: ""; position: absolute; left: 5px; top: 4px; width: 9px; height: 9px; border: 1px solid #7898b5; border-radius: 1px; background: linear-gradient(#000, #000) 1px 3px / 5px 1px no-repeat, linear-gradient(#000, #000) 3px 1px / 1px 5px no-repeat, #fff; }
.tree .m::after { background: linear-gradient(#000, #000) 1px 3px / 5px 1px no-repeat, #fff; }

.obj-h { margin-top: 6px; }
.obj { height: 256px; padding: 5px 7px 0 6px; background: #eeebdf; border-top: 1px solid #fff; border-right: 2px solid #8e8b7b; }
.objrow { display: flex; align-items: center; height: 23px; margin-bottom: 3px; }
.objname { width: 446px; height: 23px; border: 1px solid #7f9db9; background: #fff; padding: 1px 0 0 3px; letter-spacing: -.1px; }
.cb { width: 13px; height: 13px; margin: -2px 3px 0 7px; border: 1px solid #cac8bb; background: #fff; }
.kind { color: #aca899; margin-top: -2px; letter-spacing: -.1px; }
.t6 { width: 59px; } .t7 { width: 67px; } .t8 { width: 57px; }
.obj .tab { line-height: 18px; }
.obj .tab.on { line-height: 13px; }
.objpage { height: 155px; border: 1px solid #919b9c; background: #fff; padding: 1px 1px 1px 3px; }
.objpage div { height: 151px; border: 1px solid #7f9db9; }
.desc { margin-top: 9px; height: 31px; border: 1px solid; border-color: #b5b2a2 #fff #fff #b5b2a2; }

.status { height: 18px; flex: none; display: flex; padding: 0 4px 0 29px; font: 11px/20px "Noto Sans", sans-serif; background: linear-gradient(90deg, #e5e7d6 25px, transparent 25px), linear-gradient(#eeebdf, #ece8d4); white-space: nowrap; }
.ready { flex: 1; }
.s { color: #b3b09e; border-right: 1px solid #c9c6b5; height: 16px; margin-top: 2px; line-height: 15px; text-align: right; }
.c1 { width: 23px; } .c2 { width: 31px; } .c3 { width: 31px; } .c4 { width: 28px; } .c5 { width: 33px; } .c6 { width: 37px; } .c7 { width: 55px; }

.taskbar { height: 30px; flex: none; display: flex; background: linear-gradient(#1f4fc0 0, #4a8bf3 2px, #2a66e0 5px, #245edb 20px, #1e50c4 27px, #1941a5 30px); color: #fff; font: 11px/28px "Noto Sans", sans-serif; }
.start { width: 97px; display: flex; align-items: center; padding-left: 10px; background: linear-gradient(#2f7d2f 0, #6cbf6a 3px, #3c9a3b 8px, #379537 20px, #22702a 30px); border-radius: 0 10px 12px 0; box-shadow: 1px 0 2px #123a80; }
.start svg { width: 20px; height: 20px; }
.start b { margin-left: 4px; font: italic bold 17px/28px "Open Sans", sans-serif; text-shadow: 1px 1px 2px #123; letter-spacing: -.3px; }
.quick { width: 101px; display: flex; align-items: center; padding-left: 11px; gap: 7px; }
.quick svg, .task svg { width: 16px; height: 16px; }
.quick span { margin: -12px 0 0 5px; font-size: 14px; }
.task { width: 159px; height: 25px; margin: 3px 1px 0 0; flex: none; display: flex; align-items: center; gap: 4px; padding: 0 0 1px 9px; line-height: 22px; border-radius: 3px; background: linear-gradient(#6fa6fa 0, #4388f6 3px, #3c81f3 20px, #2e6ada 25px); box-shadow: inset -1px -1px #2a5fcc; white-space: nowrap; letter-spacing: -.22px; }
.task.act { background: linear-gradient(#12388e, #1c4fba 4px, #1e52b7 25px); padding-left: 11px; gap: 3px; letter-spacing: -.1px; }
.tray { margin-left: auto; width: 75px; display: flex; align-items: center; background: linear-gradient(#0d6fc5 0, #3bb6f8 2px, #1595ea 6px, #1290e8 22px, #0f74c8 30px); border-left: 1px solid #0b3f94; }
.tray svg { width: 18px; height: 18px; margin-left: -10px; }
.tray span { margin-left: 9px; letter-spacing: -.1px; }
```
